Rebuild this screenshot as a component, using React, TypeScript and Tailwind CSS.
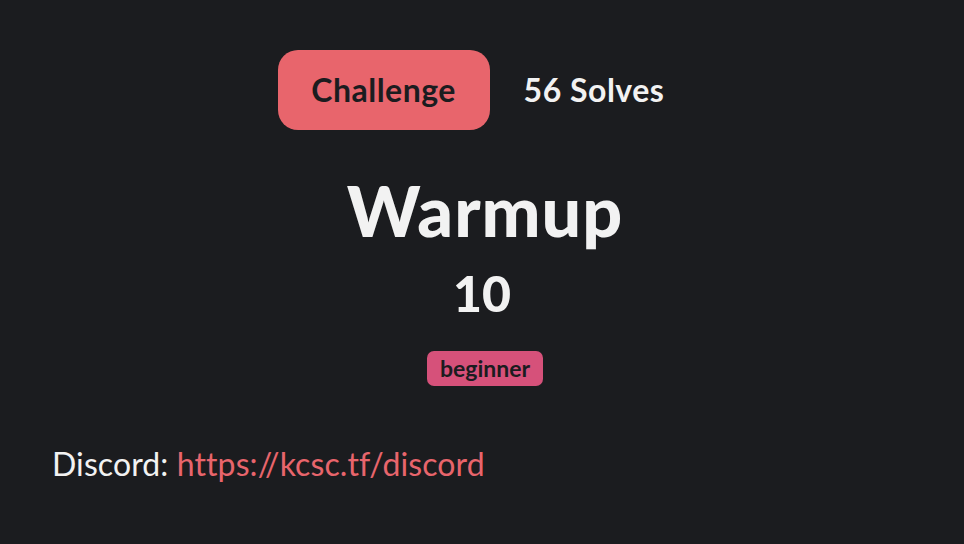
export default function App() {
  return (
    <div className="w-[964px] h-[544px] bg-[#1b1c1f] text-[#f2f2f2] font-['Lato',sans-serif] overflow-hidden">
      <div className="flex items-center justify-center gap-[34px] pt-[50px] pr-[22px]">
        <div className="w-[212px] h-[80px] rounded-[20px] bg-[#e8656c] flex items-center justify-center text-[#1b1c1f] text-[32px] font-bold tracking-[0.5px]">
          Challenge
        </div>
        <div className="text-[32px] font-bold tracking-[0.5px]">56 Solves</div>
      </div>
      <div className="flex flex-col items-center">
        <h1 className="mt-[40px] text-[70px] leading-[80px] font-black tracking-[1px] pl-[6px]">Warmup</h1>
        <div className="mt-[15px] text-[50px] leading-[56px] font-black">10</div>
        <div className="mt-[30px] ml-[6px] h-[35px] px-[13px] rounded-[7px] bg-[#d6517a] text-[#1b1c1f] text-[23px] font-bold flex items-center">
          beginner
        </div>
      </div>
      <p className="mt-[54px] ml-[52px] text-[32px] tracking-[0.1px]">
        Discord: <a className="text-[#e8656c]">https://kcsc.tf/discord</a>
      </p>
    </div>
  )
}
